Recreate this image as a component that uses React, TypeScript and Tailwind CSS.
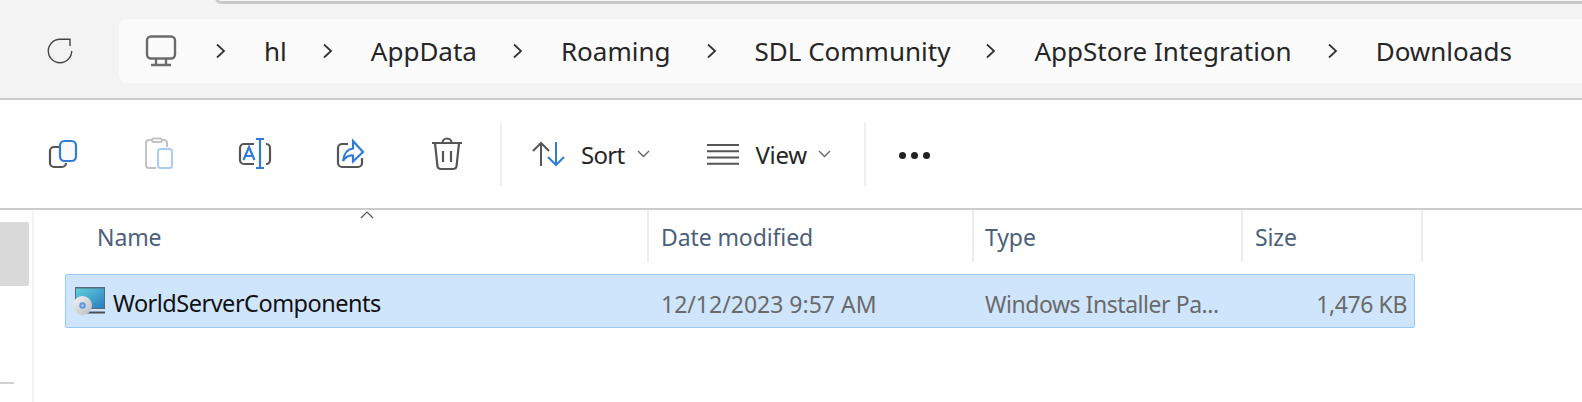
const font = { fontFamily: '"Noto Sans", "Open Sans", sans-serif' };

function Chevron() {
  return (
    <svg width="10" height="16" viewBox="0 0 10 16" className="shrink-0" fill="none" stroke="#333" strokeWidth="1.8">
      <path d="M1 1.500 8 8 1 14.500" />
    </svg>
  );
}

function Down() {
  return (
    <svg width="13" height="8" viewBox="0 0 13 8" fill="none" stroke="#666" strokeWidth="1.400">
      <path d="M1 1l5.500 5.500L12 1" />
    </svg>
  );
}

const dark = '#555';
const blue = '#2f7bd6';

function CopyIcon() {
  return (
    <svg width="40" height="40" viewBox="0 0 40 40" fill="none" strokeWidth="2.200">
      <path d="M17 13H11a4 4 0 0 0-4 4v12a4 4 0 0 0 4 4h8a4 4 0 0 0 4-4" stroke={dark} />
      <rect x="17" y="7" width="16" height="20" rx="4.500" stroke={blue} fill="#fafafa" />
    </svg>
  );
}

function PasteIcon() {
  return (
    <svg width="40" height="40" viewBox="0 0 40 40" fill="none" strokeWidth="2">
      <path d="M13 6h-3a3 3 0 0 0-3 3v22a3 3 0 0 0 3 3h7M23 6h2a3 3 0 0 1 3 3v4" stroke="#c2c2c2" />
      <rect x="13" y="4.500" width="10" height="3.500" rx="1.700" stroke="#c2c2c2" />
      <rect x="19" y="15" width="14" height="19" rx="2.500" stroke="#a9cdf0" />
    </svg>
  );
}

function RenameIcon() {
  return (
    <svg width="40" height="40" viewBox="0 0 40 40" fill="none" strokeWidth="2.200">
      <path d="M19 10H9a4 4 0 0 0-4 4v12a4 4 0 0 0 4 4h10M31 10h.5a3.500 4 0 0 1 3.500 4v12a3.500 4 0 0 1-3.500 4H31" stroke={dark} />
      <path d="M21 5h8M25 5v29M21 34h8" stroke={blue} />
      <path d="M8.500 26l5.500-13 5.500 13M10.500 22h7" stroke={blue} />
    </svg>
  );
}

function ShareIcon() {
  return (
    <svg width="40" height="40" viewBox="0 0 40 40" fill="none" strokeWidth="2.200">
      <path d="M17 10h-6a4 4 0 0 0-4 4v15a4 4 0 0 0 4 4h16a4 4 0 0 0 4-4v-5" stroke={dark} />
      <path d="M22 7l10 11-10 9.500v-6c-4-.5-7 1-10 5.500 1-8 5-12 10-12.500z" stroke={blue} strokeLinejoin="miter" />
    </svg>
  );
}

function TrashIcon() {
  return (
    <svg width="40" height="40" viewBox="0 0 40 40" fill="none" stroke={dark} strokeWidth="2.200">
      <path d="M5 9h30M8 9l2.500 23.500A3.500 3.500 0 0 0 14 35h12a3.500 3.500 0 0 0 3.500-2.500L32 9M15.500 9a4.500 4.500 0 0 1 9 0M16 17v11M24 17v11" />
    </svg>
  );
}

function SortIcon() {
  return (
    <svg width="33" height="26" viewBox="0 0 33 26" fill="none" strokeWidth="2">
      <path d="M9 25V2M1 10l8-8 8 8" stroke={dark} />
      <path d="M24 1v23M16 16l8 8 8-8" stroke={blue} />
    </svg>
  );
}

function ViewIcon() {
  return (
    <svg width="32" height="22" viewBox="0 0 32 22" fill="none" stroke={dark} strokeWidth="2">
      <path d="M0 2h32M0 8.300h32M0 14.500h32M0 20.800h32" />
    </svg>
  );
}

function Msi() {
  return (
    <svg width="32" height="28" viewBox="0 0 32 28" className="mb-[6px] shrink-0">
      <defs>
        <linearGradient id="scr" x1="0" y1="0" x2="1" y2="1">
          <stop offset="0" stopColor="#62cfdc" />
          <stop offset="1" stopColor="#2a7cc0" />
        </linearGradient>
        <linearGradient id="disc" x1="0" y1="0" x2="1" y2="1">
          <stop offset="0" stopColor="#f2f3f5" />
          <stop offset="1" stopColor="#b9bcc2" />
        </linearGradient>
      </defs>
      <rect x="2" y="0" width="30" height="22" fill="#5a6a78" />
      <rect x="3" y="1.500" width="28" height="19.500" fill="url(#scr)" />
      <rect x="14" y="24.500" width="18" height="2" fill="#4a4f55" />
      <circle cx="9.500" cy="18.500" r="9.500" fill="url(#disc)" />
      <circle cx="9.500" cy="18.500" r="3.200" fill="#5f97de" />
      <circle cx="9.500" cy="18.500" r="1" fill="#dfe9f8" />
    </svg>
  );
}

function Tool({ children }: { children: React.ReactNode }) {
  return <div className="flex w-[96px] shrink-0 items-center justify-center">{children}</div>;
}

const crumbs = ['hl', 'AppData', 'Roaming', 'SDL Community', 'AppStore Integration', 'Downloads'];

export default function App() {
  return (
    <div className="relative h-[402px] w-[1582px] overflow-hidden bg-white" style={font}>
      <div className="absolute left-[215px] top-[-8px] h-[12px] w-[1367px] rounded-bl-[6px] border-b-[3px] border-l-[3px] border-[#c9c9c9] bg-[#f3f3f3]" />

      <div className="flex h-[100px] items-start border-b-2 border-[#cccccc] bg-[#f3f3f3] pt-[19px]">
        <div className="flex h-[64px] w-[119px] shrink-0 items-center justify-center">
          <svg width="26" height="26" viewBox="0 0 26 26" fill="none" stroke="#444" strokeWidth="1.400">
            <path d="M24.700 13A11.700 11.700 0 1 1 13 1.300H23V8" />
          </svg>
        </div>
        <div className="flex h-[64px] flex-1 items-center rounded-l-[8px] bg-[#fbfbfb] pl-[26px] text-[26px] text-[#262626]">
          <svg width="32" height="32" viewBox="0 0 32 32" fill="none" stroke="#6b6b6b" strokeWidth="2.400" className="mr-[39px] shrink-0">
            <rect x="2" y="1.500" width="28" height="22" rx="4" />
            <path d="M11 24v5M21 24v5M6 30h20" />
          </svg>
          <div className="flex items-center gap-[36px]">
            {crumbs.map((c) => (
              <div key={c} className="flex items-center gap-[38px]">
                <Chevron />
                <span className="whitespace-nowrap">{c}</span>
              </div>
            ))}
          </div>
        </div>
      </div>

      <div className="flex h-[110px] items-center border-b-2 border-[#cccccc] pl-[15px] text-[24px] text-[#262626]">
        <Tool><CopyIcon /></Tool>
        <Tool><PasteIcon /></Tool>
        <Tool><RenameIcon /></Tool>
        <Tool><ShareIcon /></Tool>
        <Tool><TrashIcon /></Tool>
        <div className="ml-[5px] h-[63px] w-[2px] bg-[#efefef]" />
        <div className="ml-[30px] flex items-center">
          <SortIcon />
          <span className="ml-[16px] pt-[2px] tracking-[-0.7px]">Sort</span>
          <span className="ml-[13px] flex"><Down /></span>
        </div>
        <div className="ml-[57px] flex items-center">
          <ViewIcon />
          <span className="ml-[16px] pt-[2px] tracking-[-0.3px]">View</span>
          <span className="ml-[11px] flex"><Down /></span>
        </div>
        <div className="ml-[33px] h-[63px] w-[2px] bg-[#efefef]" />
        <div className="ml-[33px] mt-[2px] flex gap-[5px]">
          <span className="h-[7px] w-[7px] rounded-full bg-[#222]" />
          <span className="h-[7px] w-[7px] rounded-full bg-[#222]" />
          <span className="h-[7px] w-[7px] rounded-full bg-[#222]" />
        </div>
      </div>

      <div className="flex h-[192px]">
        <div className="flex w-[34px] shrink-0 flex-col border-r-2 border-[#f3f3f3] pt-[12px]">
          <div className="h-[64px] w-[29px] rounded-r-[2px] bg-[#d9d9d9]" />
          <div className="mt-[96px] h-[2px] w-[14px] bg-[#d0d0d0]" />
        </div>
        <div className="relative flex-1">
          <svg width="14" height="8" viewBox="0 0 14 8" fill="none" stroke="#555" strokeWidth="1.200" className="absolute left-[326px] top-[1px]">
            <path d="M1 7l6-6 6 6" />
          </svg>
          <div className="flex h-[52px] items-center text-[23px] tracking-[-0.1px] text-[#4c607a]">
            <div className="flex h-full w-[615px] items-center border-r-2 border-[#ececec] pl-[63px] pt-[3px]">Name</div>
            <div className="flex h-full w-[325px] items-center border-r-2 border-[#ececec] pl-[12px] pt-[3px]">Date modified</div>
            <div className="flex h-full w-[269px] items-center border-r-2 border-[#ececec] pl-[11px] pt-[3px]">Type</div>
            <div className="flex h-full w-[180px] items-center border-r-2 border-[#ececec] pl-[12px] pt-[3px]">Size</div>
          </div>
          <div className="ml-[31px] mt-[12px] flex h-[54px] w-[1350px] items-center rounded-[2px] border border-[#99c9f5] bg-[#cfe5fc] pt-[6px] text-[23px] text-[#6a6a6a]">
            <div className="flex w-[583px] shrink-0 items-center gap-[8px] pl-[7px] text-[23.500px] tracking-[-0.5px] text-[#111]">
              <Msi />
              <span>WorldServerComponents</span>
            </div>
            <div className="w-[325px] shrink-0 pl-[12px] whitespace-nowrap">12/12/2023 9:57 AM</div>
            <div className="w-[269px] shrink-0 pl-[11px] tracking-[-0.45px] whitespace-nowrap">Windows Installer Pa...</div>
            <div className="flex-1 pr-[7px] text-right tracking-[-0.4px] whitespace-nowrap">1,476 KB</div>
          </div>
        </div>
      </div>
    </div>
  );
}
